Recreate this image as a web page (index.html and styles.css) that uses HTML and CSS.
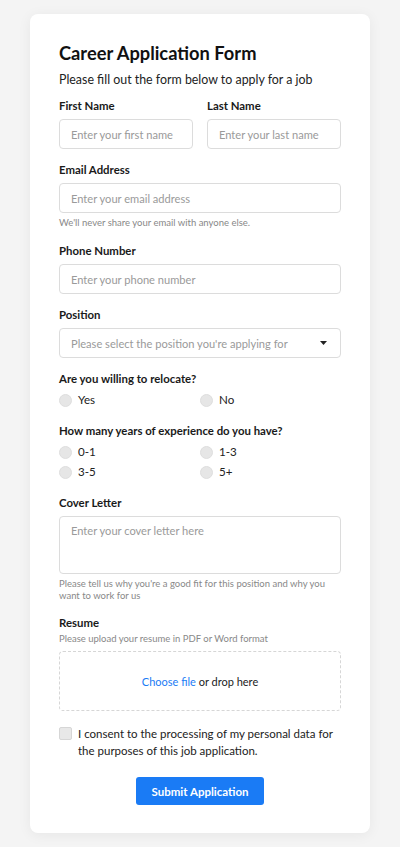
FILE: index.html
```html
<!DOCTYPE html>
<html lang="en">
<head>
<meta charset="utf-8">
<title>Career Application Form</title>
<link rel="stylesheet" href="styles.css">
</head>
<body>
<main class="card">
  <h1 class="title">Career Application Form</h1>
  <p class="subtitle">Please fill out the form below to apply for a job</p>

  <div class="row-2">
    <div class="group">
      <label class="label">First Name</label>
      <input class="input" type="text" placeholder="Enter your first name">
    </div>
    <div class="group">
      <label class="label">Last Name</label>
      <input class="input" type="text" placeholder="Enter your last name">
    </div>
  </div>

  <div class="group">
    <label class="label">Email Address</label>
    <input class="input" type="email" placeholder="Enter your email address">
    <p class="help">We'll never share your email with anyone else.</p>
  </div>

  <div class="group">
    <label class="label">Phone Number</label>
    <input class="input" type="tel" placeholder="Enter your phone number">
  </div>

  <div class="group">
    <label class="label">Position</label>
    <div class="select-wrap">
      <div class="input select">Please select the position you're applying for</div>
      <svg class="caret" width="7" height="4" viewBox="0 0 7 4"><path d="M0 0h7L3.5 4z" fill="#222"/></svg>
    </div>
  </div>

  <div class="group group-opts">
    <span class="label">Are you willing to relocate?</span>
    <div class="options">
      <label class="opt"><span class="radio"></span>Yes</label>
      <label class="opt"><span class="radio"></span>No</label>
    </div>
  </div>

  <div class="group group-opts">
    <span class="label">How many years of experience do you have?</span>
    <div class="options">
      <label class="opt"><span class="radio"></span>0-1</label>
      <label class="opt"><span class="radio"></span>1-3</label>
      <label class="opt"><span class="radio"></span>3-5</label>
      <label class="opt"><span class="radio"></span>5+</label>
    </div>
  </div>

  <div class="group">
    <label class="label">Cover Letter</label>
    <div class="input textarea">Enter your cover letter here</div>
    <p class="help help-2">Please tell us why you're a good fit for this position and why you want to work for us</p>
  </div>

  <div class="group">
    <span class="label">Resume</span>
    <p class="help help-top">Please upload your resume in PDF or Word format</p>
    <div class="drop"><span class="link">Choose file</span>&nbsp;or drop here</div>
  </div>

  <label class="consent"><span class="check"></span><span>I consent to the processing of my personal data for the purposes of this job application.</span></label>

  <div class="actions">
    <button class="btn" type="button">Submit Application</button>
  </div>
</main>
</body>
</html>
```
FILE: styles.css
```css
* { box-sizing: border-box; }
html, body { margin: 0; padding: 0; }
body {
  background: #f4f4f4;
  font-family: "Lato", "Noto Sans", sans-serif;
  color: #222;
  padding: 14px 30px 15px;
}
.card {
  width: 340px;
  background: #fff;
  border-radius: 8px;
  box-shadow: 0 2px 14px rgba(0,0,0,0.06);
  padding: 27px 29px 28px;
}
.title {
  margin: 0;
  font-size: 18.3px;
  line-height: 24px;
  font-weight: 700;
  color: #111;
}
.subtitle {
  margin: 6px 0 8px;
  font-size: 12.4px;
  line-height: 18px;
  color: #222;
}
.row-2 {
  display: grid;
  grid-template-columns: 1fr 1fr;
  column-gap: 14px;
}
.group { margin-bottom: 12px; }
.group-opts { margin-bottom: 13px; }
.label {
  display: block;
  font-size: 11.4px;
  line-height: 18px;
  font-weight: 700;
  color: #1a1a1a;
  margin-bottom: 4px;
}
.input {
  display: block;
  width: 100%;
  height: 30px;
  border: 1px solid #dcdcdc;
  border-radius: 4px;
  padding: 0 11px;
  font-family: inherit;
  font-size: 11.1px;
  color: #222;
  background: #fff;
  outline: none;
}
.input::placeholder { color: #9a9a9a; }
.select-wrap { position: relative; }
.select {
  display: flex;
  align-items: center;
  color: #9a9a9a;
  white-space: nowrap;
  overflow: hidden;
  padding-right: 30px;
}
.caret { position: absolute; right: 14px; top: 13px; }
.help {
  margin: 3px 0 0;
  font-size: 9.5px;
  line-height: 14px;
  color: #888;
}
.help-2 { line-height: 12px; margin-top: 4px; }
.help-top { margin: -4px 0 5px; }
.options {
  display: grid;
  grid-template-columns: 1fr 1fr;
  row-gap: 2px;
  margin-top: -1px;
}
.opt {
  display: flex;
  align-items: center;
  gap: 6px;
  font-size: 11.6px;
  line-height: 18px;
  color: #222;
}
.radio {
  width: 13px;
  height: 13px;
  border-radius: 50%;
  background: #e6e6e6;
  border: 1px solid #dedede;
}
.textarea {
  height: 58px;
  padding-top: 6px;
  color: #9a9a9a;
  line-height: 16px;
}
.drop {
  height: 60px;
  border: 1px dashed #d6d6d6;
  border-radius: 4px;
  display: flex;
  align-items: center;
  justify-content: center;
  font-size: 11px;
  color: #222;
}
.link { color: #1a7bf5; }
.consent {
  display: flex;
  gap: 6px;
  font-size: 11.5px;
  line-height: 17px;
  color: #222;
  margin-top: 14px;
}
.check {
  flex: none;
  width: 13px;
  height: 13px;
  margin-top: 2px;
  border-radius: 2px;
  background: #e8e8e8;
  border: 1px solid #d6d6d6;
}
.actions {
  display: flex;
  justify-content: center;
  margin-top: 18px;
}
.btn {
  width: 128px;
  height: 28px;
  border: none;
  border-radius: 3px;
  background: #1a7bf5;
  color: #fff;
  font-family: inherit;
  font-size: 11.5px;
  font-weight: 700;
  cursor: pointer;
}
```
